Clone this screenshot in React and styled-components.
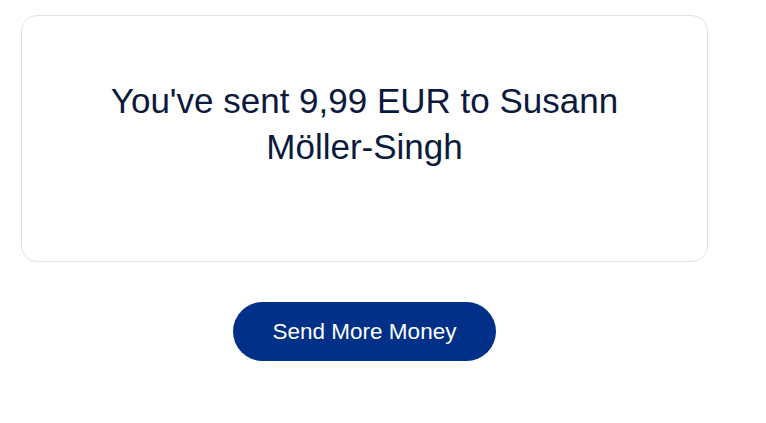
import React from "react";
import styled, { createGlobalStyle } from "styled-components";

const GlobalStyle = createGlobalStyle`
  body {
    margin: 0;
    background: #ffffff;
    font-family: "Liberation Sans", Arial, sans-serif;
  }
`;

const Page = styled.main`
  width: 687px;
  margin-left: 21px;
  padding-top: 15px;
  display: flex;
  flex-direction: column;
  align-items: center;
`;

const Card = styled.section`
  box-sizing: border-box;
  width: 100%;
  height: 247px;
  border: 1px solid #e2e2e2;
  border-radius: 16px;
  padding: 62px 60px 0;
`;

const Message = styled.h2`
  margin: 0;
  font-size: 35px;
  font-weight: 400;
  line-height: 46px;
  text-align: center;
  color: #0b1a3c;
`;

const Button = styled.button`
  margin-top: 40px;
  width: 263px;
  height: 59px;
  border: none;
  border-radius: 30px;
  background: #003087;
  color: #ffffff;
  font-family: "Liberation Sans", Arial, sans-serif;
  font-size: 22.5px;
  cursor: pointer;
`;

export default function App() {
  return (
    <>
      <GlobalStyle />
      <Page>
        <Card>
          <Message>You've sent 9,99 EUR to Susann Möller-Singh</Message>
        </Card>
        <Button>Send More Money</Button>
      </Page>
    </>
  );
}
